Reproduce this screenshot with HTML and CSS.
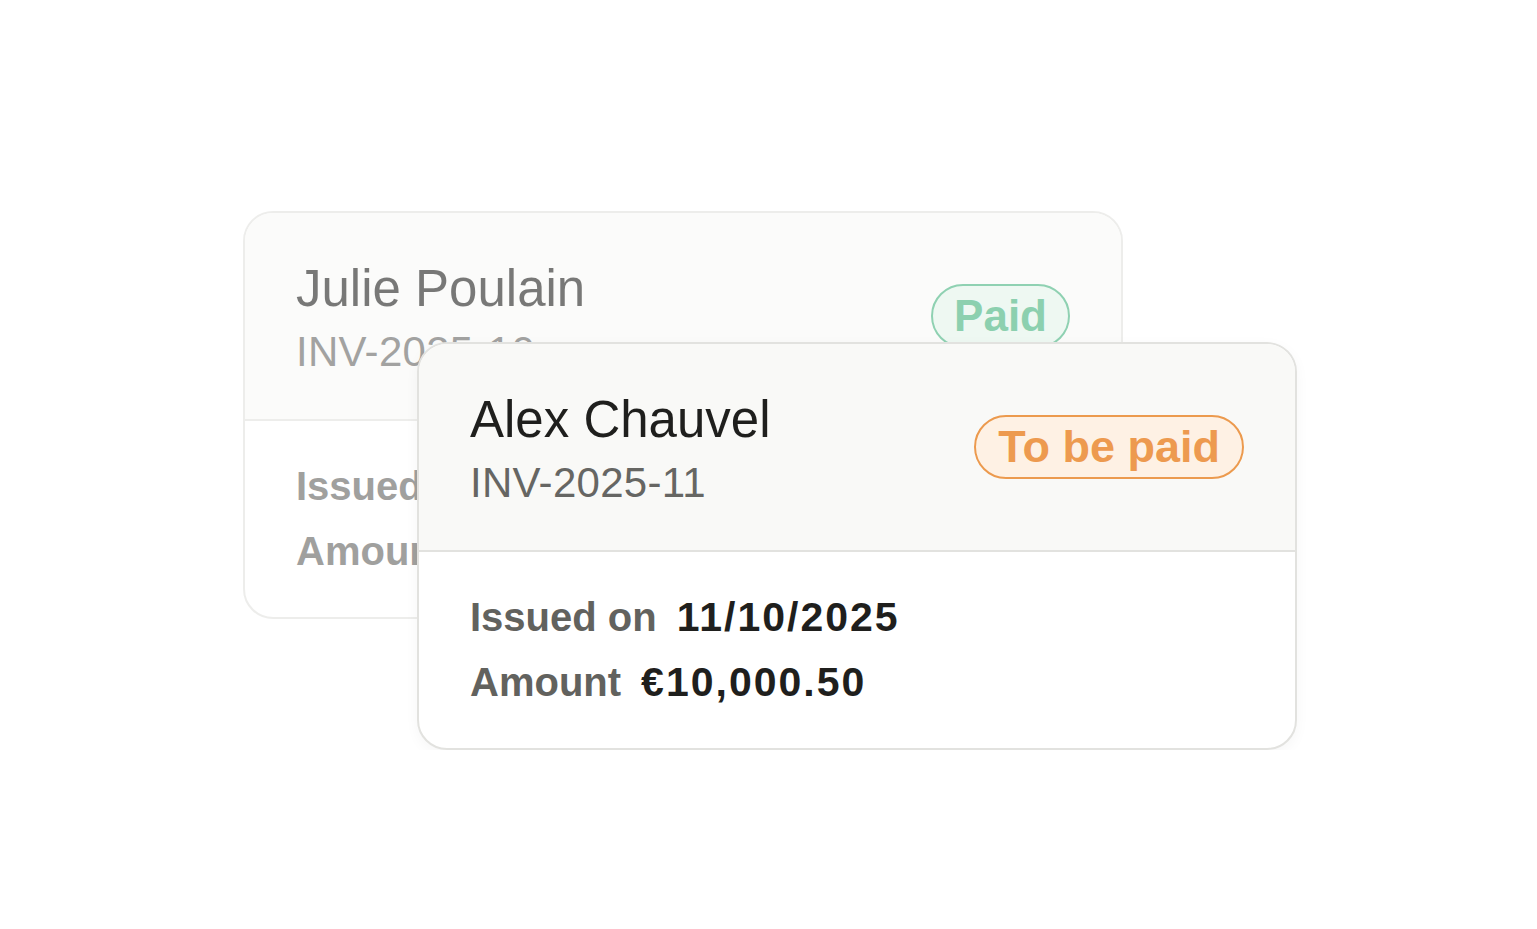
FILE: index.html
```html
<!DOCTYPE html>
<html lang="en">
<head>
    <meta charset="UTF-8">
    <meta name="viewport" content="width=device-width, initial-scale=1.0">
    <title>Invoices</title>
    <link rel="stylesheet" href="styles.css">
</head>
<body>

<div class="stack">
    <div class="card card-back">
        <div class="card-head">
            <div class="who">
                <p class="name">Julie Poulain</p>
                <p class="ref">INV-2025-10</p>
            </div>
            <span class="badge paid">Paid</span>
        </div>
        <div class="card-body">
            <div class="row"><span class="label">Issued on</span><span class="value">03/10/2025</span></div>
            <div class="row"><span class="label">Amount</span><span class="value">€4,200.00</span></div>
        </div>
    </div>

    <div class="card card-front">
        <div class="card-head">
            <div class="who">
                <p class="name">Alex Chauvel</p>
                <p class="ref">INV-2025-11</p>
            </div>
            <span class="badge due">To be paid</span>
        </div>
        <div class="card-body">
            <div class="row"><span class="label">Issued on</span><span class="value">11/10/2025</span></div>
            <div class="row"><span class="label">Amount</span><span class="value">€10,000.50</span></div>
        </div>
    </div>
</div>

</body>
</html>
```

FILE: styles.css
```css
body {
    font-family: 'Liberation Sans', Arial, sans-serif;
    margin: 0;
    padding: 0;
    background: #fff;
    color: #1f1f1d;
}
.stack {
    position: relative;
    width: 1054px;
    height: 539px;
    padding: 211px 0 0 243px;
}
.card {
    width: 880px;
    height: 408px;
    box-sizing: border-box;
    border: 2px solid #e2e2df;
    border-radius: 30px;
    background: #fff;
    overflow: hidden;
    display: flex;
    flex-direction: column;
}
.card-back {
    opacity: 0.6;
}
/* the second invoice sits over the first one */
.card-front {
    position: absolute;
    left: 417px;
    top: 342px;
    box-shadow: 0 4px 14px rgba(0, 0, 0, 0.04);
}
.card-head {
    height: 208px;
    flex-shrink: 0;
    box-sizing: border-box;
    padding: 0 51px 0 51px;
    background: #f9f9f7;
    border-bottom: 2px solid #e2e2df;
    display: flex;
    align-items: center;
    justify-content: space-between;
}
.who {
    margin-top: 9px;
}
.who p {
    margin: 0;
}
.name {
    font-size: 51px;
    line-height: 60px;
    color: #1f1f1d;
}
.ref {
    margin-top: 3px !important;
    font-size: 42px;
    line-height: 60px;
    letter-spacing: 0.3px;
    color: #666663;
}
.badge {
    height: 64px;
    box-sizing: border-box;
    padding: 0 22px;
    border: 2px solid;
    border-radius: 32px;
    font-size: 45px;
    font-weight: bold;
    line-height: 60px;
}
.paid {
    font-size: 44px;
    padding: 0 21px;
    color: #41b17b;
    border-color: #45b37f;
    background: #e3f5eb;
}
.due {
    color: #ed9a4f;
    border-color: #ec9a4e;
    background: #fef1e4;
}
.card-body {
    padding: 33px 51px 0 51px;
}
.row {
    display: flex;
    align-items: baseline;
    gap: 20px;
    font-size: 40px;
    line-height: 65px;
    font-weight: bold;
}
.label {
    color: #62625e;
}
.value {
    font-size: 41px;
    color: #1f1f1d;
    letter-spacing: 2px;
}
```
